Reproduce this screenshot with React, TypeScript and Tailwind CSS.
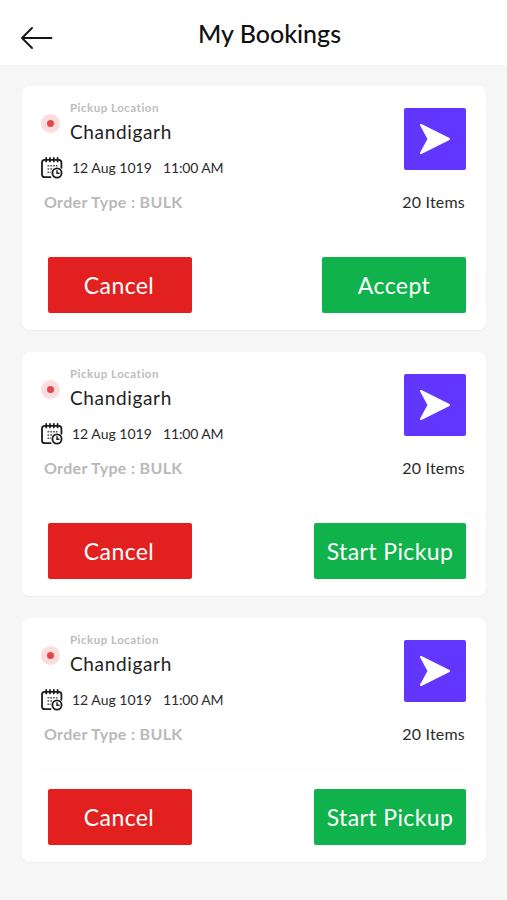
import React from 'react'

interface Booking {
  id: number
  location: string
  date: string
  time: string
  orderType: string
  items: number
  action: 'Accept' | 'Start Pickup'
}

const bookings: Booking[] = [
  { id: 1, location: 'Chandigarh', date: '12 Aug 1019', time: '11:00 AM', orderType: 'BULK', items: 20, action: 'Accept' },
  { id: 2, location: 'Chandigarh', date: '12 Aug 1019', time: '11:00 AM', orderType: 'BULK', items: 20, action: 'Start Pickup' },
  { id: 3, location: 'Chandigarh', date: '12 Aug 1019', time: '11:00 AM', orderType: 'BULK', items: 20, action: 'Start Pickup' },
]

function BackIcon() {
  return (
    <svg width="34" height="26" viewBox="0 0 34 26" fill="none" stroke="#161616" strokeWidth="1.9" strokeLinecap="round" strokeLinejoin="round">
      <path d="M31.5 13H2M12 3L2 13l10 10" />
    </svg>
  )
}

function CalendarIcon() {
  return (
    <svg width="22" height="22" viewBox="0 0 22 22" fill="none" stroke="#1c1c1c" strokeWidth="1.8" strokeLinecap="round">
      <path d="M9.5 20.2H3.6C2 20.2 1 19.2 1 17.6V5.4C1 3.8 2 2.8 3.6 2.8h14.2c1.6 0 2.6 1 2.6 2.6v5.4" />
      <path d="M5.2 1v3.4M9 1v3.4M12.8 1v3.4M16.6 1v3.4" />
      <path d="M6.5 8.8h10M6.5 12h5.5M6.5 15.2h3.5" stroke="#555" strokeWidth="1.4" strokeDasharray="1.7 1.1" strokeLinecap="butt" />
      <circle cx="16" cy="16" r="4.6" />
      <path d="M16 13.8v2.4h2" strokeWidth="1.4" />
    </svg>
  )
}

function NavigateIcon() {
  return (
    <svg width="32" height="32" viewBox="0 0 32 32" fill="#fff" stroke="#fff" strokeWidth="2" strokeLinejoin="round">
      <path d="M2 2L30 16 2 30 9.6 16z" />
    </svg>
  )
}

function BookingCard({ booking }: { booking: Booking }) {
  return (
    <div className="flex h-[244px] flex-col rounded-lg bg-white pr-5 pl-[19px] shadow-[0_1px_2px_rgba(0,0,0,0.04)]">
      <div className="flex justify-between">
        <div>
          {/* Pickup location */}
          <div className="mt-3.5 flex gap-[9px]">
            <div className="mt-3.5 flex h-[19px] w-[19px] items-center justify-center rounded-full bg-[#fddcde]">
              <div className="h-[7px] w-[7px] rounded-full bg-[#e2474b]"></div>
            </div>
            <div className="pl-px">
              <div className="text-[11.5px] leading-4 font-bold tracking-[0.5px] text-[#bdbdbd]">Pickup Location</div>
              <div className="mt-1 text-[19px] leading-6 tracking-[0.65px] text-[#222]">{booking.location}</div>
            </div>
          </div>

          {/* Date and time */}
          <div className="mt-[13px] flex h-[22px] items-center text-sm text-[#2b2b2b]">
            <CalendarIcon />
            <span className="ml-[9px] w-[91px] whitespace-nowrap">{booking.date}</span>
            <span className="tracking-[-0.15px] whitespace-nowrap">{booking.time}</span>
          </div>
        </div>

        <button className="mt-[22px] flex h-[62px] w-[62px] items-center justify-center rounded-xs bg-[#6236ff]">
          <NavigateIcon />
        </button>
      </div>

      <div className="mt-[13px] flex h-5 items-center justify-between pr-px pl-[3px]">
        <span className="text-base font-bold tracking-[0.32px] text-[#b9b9b9]">Order Type : {booking.orderType}</span>
        <span className="text-base tracking-[0.2px] text-[#2b2b2b]">{booking.items} Items</span>
      </div>

      <div className="mt-6 border-t border-[#fcfcfc]"></div>

      <div className="mt-5 flex justify-between pl-[7px] text-[23px] tracking-[0.4px] text-white">
        <button className="h-14 w-36 rounded-xs bg-[#e22020] pr-0.5">Cancel</button>
        <button className={`h-14 rounded-xs bg-[#0fb24b] ${booking.action === 'Accept' ? 'w-36' : 'w-[152px]'}`}>
          {booking.action}
        </button>
      </div>
    </div>
  )
}

export default function App() {
  return (
    <div className="min-h-screen bg-[#f6f6f6] font-['Lato',sans-serif]">
      <header className="grid h-[65px] grid-cols-[54px_1fr_21px] items-center bg-white pl-5">
        <button className="pt-2.5">
          <BackIcon />
        </button>
        <h1 className="pt-0.5 pr-[21px] text-center text-[25px] font-medium text-[#111]">My Bookings</h1>
      </header>

      <main className="flex flex-col gap-[22px] pt-[21px] pr-[21px] pl-[22px]">
        {bookings.map((booking) => (
          <BookingCard key={booking.id} booking={booking} />
        ))}
      </main>
    </div>
  )
}
